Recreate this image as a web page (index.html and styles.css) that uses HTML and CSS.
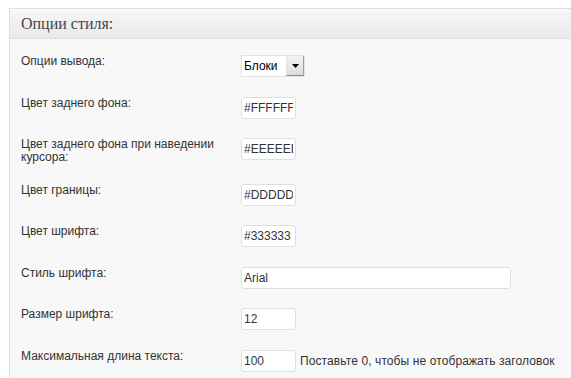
FILE: index.html
```html
<!DOCTYPE html>
<html lang="ru">
<head>
    <meta charset="UTF-8">
    <meta name="viewport" content="width=device-width, initial-scale=1.0">
    <title>Опции стиля</title>
    <link rel="stylesheet" href="styles.css">
</head>
<body>
    <div class="postbox">
        <h3 class="hndle">Опции стиля:</h3>
        <div class="inside">
            <div class="row">
                <label class="label">Опции вывода:</label>
                <div class="field">
                    <div class="select">
                        <span class="select-value">Блоки</span>
                        <span class="select-btn">
                            <svg width="7" height="4" viewBox="0 0 7 4"><path d="M0 0h7L3.5 4z" fill="#000"/></svg>
                        </span>
                    </div>
                </div>
            </div>
            <div class="row">
                <label class="label">Цвет заднего фона:</label>
                <div class="field"><input class="small" type="text" value="#FFFFFF"></div>
            </div>
            <div class="row">
                <label class="label">Цвет заднего фона при наведении курсора:</label>
                <div class="field"><input class="small" type="text" value="#EEEEEE"></div>
            </div>
            <div class="row">
                <label class="label">Цвет границы:</label>
                <div class="field"><input class="small" type="text" value="#DDDDDD"></div>
            </div>
            <div class="row">
                <label class="label">Цвет шрифта:</label>
                <div class="field"><input class="small" type="text" value="#333333"></div>
            </div>
            <div class="row">
                <label class="label">Стиль шрифта:</label>
                <div class="field"><input class="wide" type="text" value="Arial"></div>
            </div>
            <div class="row">
                <label class="label">Размер шрифта:</label>
                <div class="field"><input class="small" type="text" value="12"></div>
            </div>
            <div class="row last">
                <label class="label">Максимальная длина текста:</label>
                <div class="field">
                    <input class="small" type="text" value="100">
                    <span class="hint">Поставьте 0, чтобы не отображать заголовок</span>
                </div>
            </div>
        </div>
    </div>
</body>
</html>
```

FILE: styles.css
```css
html, body {
    margin: 0;
    overflow: hidden;
    background-color: #fff;
}
body {
    font-family: "Liberation Sans", Arial, sans-serif;
    font-size: 12px;
    color: #333;
}
/* Panel box, cut off by the right edge of the window */
.postbox {
    margin: 8px 0 0 9px;
    border: 1px solid #dfdfdf;
    border-right: none;
    border-bottom: none;
    background-color: #f8f8f8;
}
.hndle {
    margin: 0;
    height: 29px;
    padding-left: 11px;
    font-family: "Liberation Serif", Georgia, serif;
    font-size: 16px;
    font-weight: normal;
    line-height: 29px;
    color: #464646;
    background: linear-gradient(to bottom, #f9f9f9 0%, #f4f4f4 20%, #ededed 80%, #e9e9e9 100%);
    border-bottom: 1px solid #dfdfdf;
}
.inside {
    padding: 7px 0 0 11px;
}
.row {
    display: flex;
    align-items: flex-start;
    padding: 9px 0 10.5px 0;
}
.row.last {
    padding-bottom: 9px;
}
.label {
    width: 200px;
    margin-right: 20px;
    line-height: 13px;
}
.field {
    display: flex;
    align-items: center;
}
input {
    box-sizing: border-box;
    height: 22px;
    margin: 0;
    padding: 0 2px;
    border: 1px solid #dfdfdf;
    border-radius: 3px;
    background-color: #fff;
    font-family: "Liberation Sans", Arial, sans-serif;
    font-size: 12px;
    color: #333;
}
input.small {
    width: 55px;
}
input.wide {
    width: 270px;
}
.hint {
    margin-left: 4px;
    letter-spacing: 0.1px;
}
/* Fake drop-down */
.select {
    box-sizing: border-box;
    display: flex;
    width: 64px;
    height: 22px;
    border: 1px solid #e2e2e2;
    background-color: #fff;
}
.select-value {
    flex: 1;
    padding-left: 2px;
    line-height: 20px;
    font-size: 12px;
    color: #000;
}
.select-btn {
    display: flex;
    align-items: center;
    justify-content: center;
    width: 16px;
    border-left: 1px solid #e6e6e6;
    border-right: 1px solid #a0a0a0;
    border-bottom: 1px solid #8a8a8a;
    background: linear-gradient(to bottom, #f4f4f4, #dcdcdc);
}
```
